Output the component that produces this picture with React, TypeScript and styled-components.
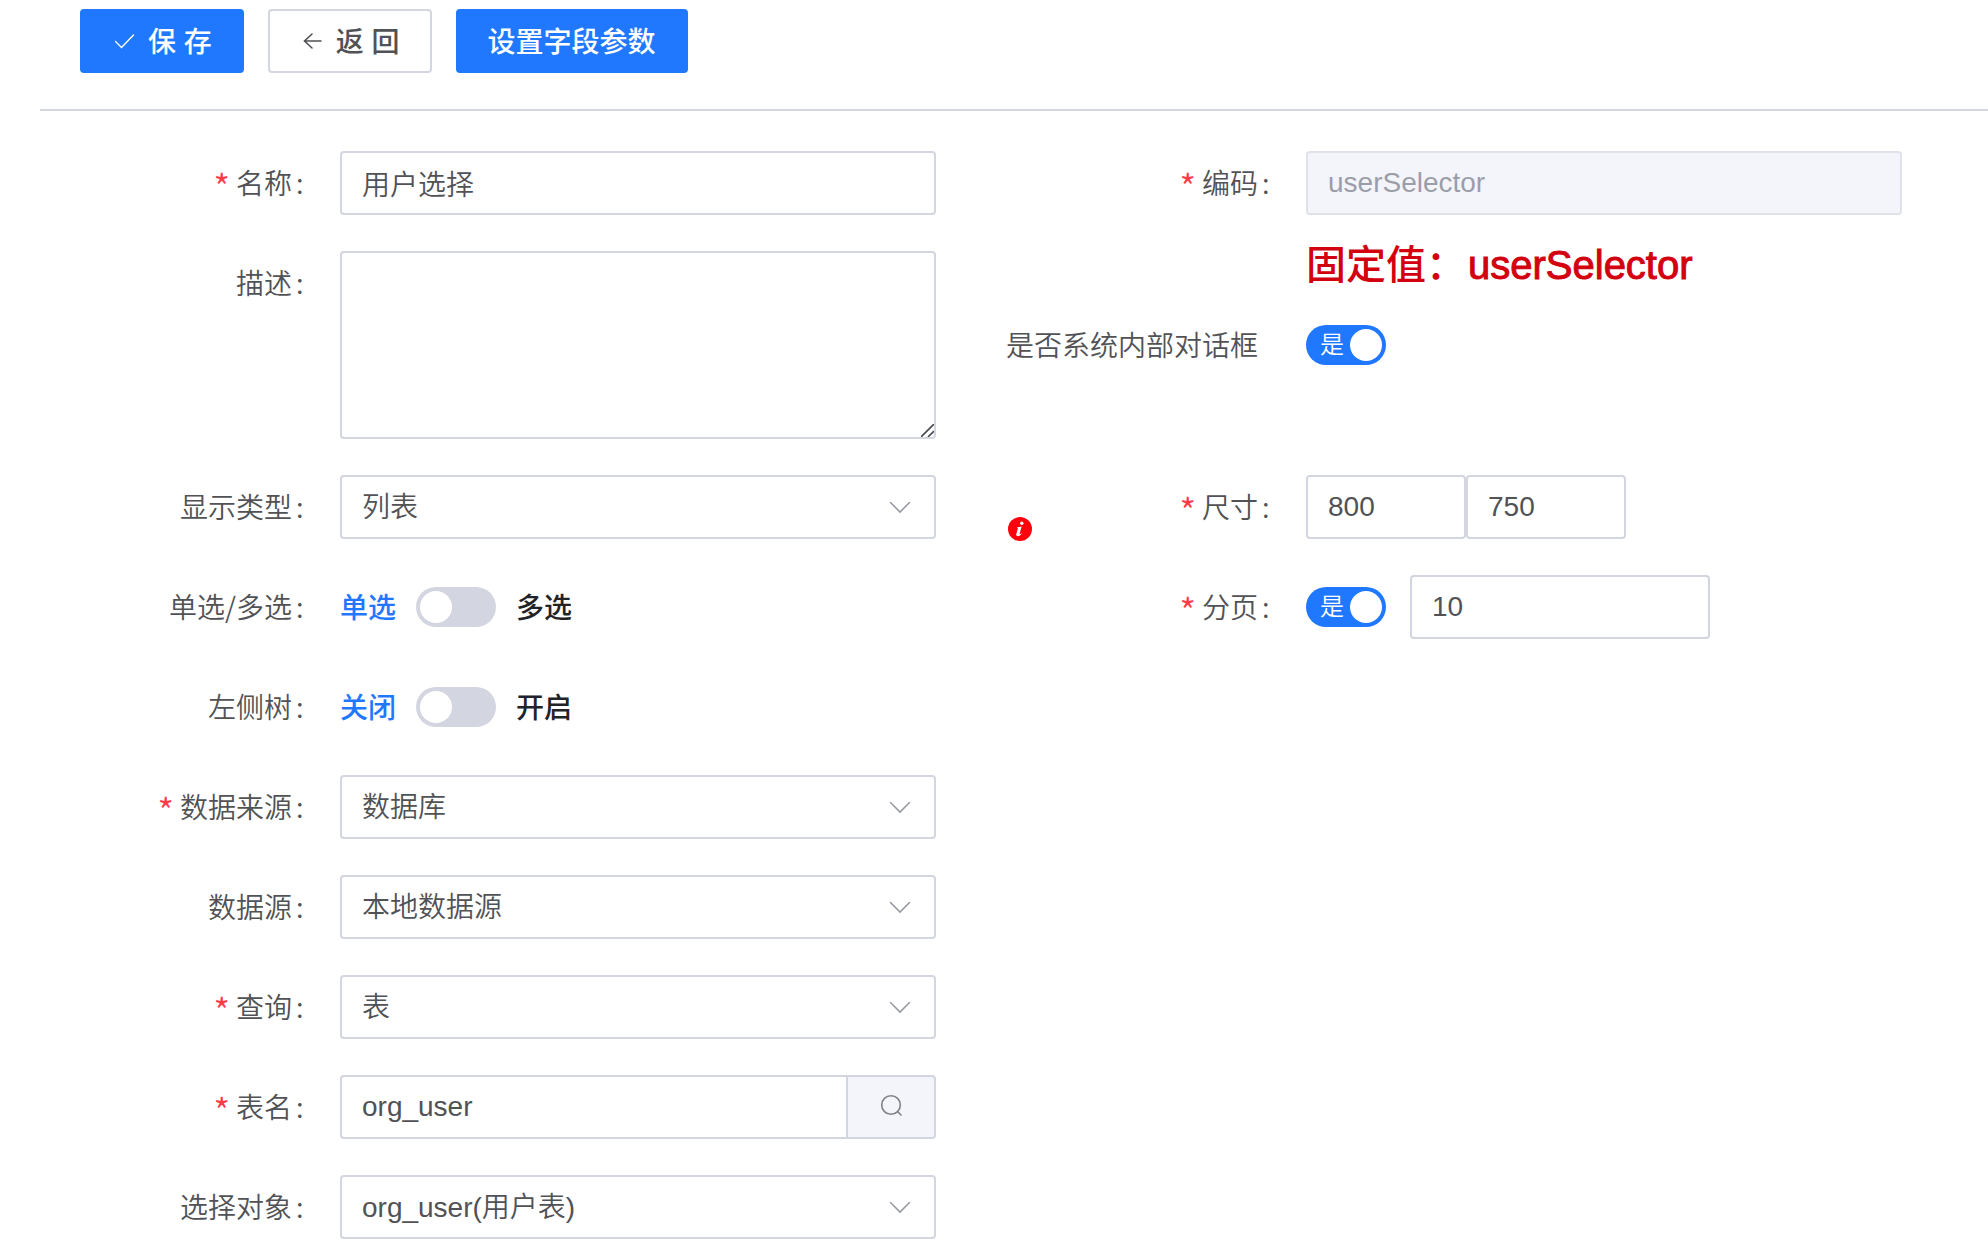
import React, { useState } from 'react';
import type { ReactNode } from 'react';
import styled, { createGlobalStyle, css } from 'styled-components';

const color = {
  primary: '#1f78ff',
  text: '#515256',
  strong: '#222326',
  muted: '#9b9ea8',
  border: '#d3d6e0',
  borderDisabled: '#dfe1eb',
  fill: '#f3f5fa',
  required: '#ff3b47',
  hint: '#d3000f',
  info: '#ff000c',
};

const GlobalStyle = createGlobalStyle`
  * { box-sizing: border-box; }
  body {
    margin: 0;
    background: #fff;
    color: ${color.text};
    font: 28px/40px "Liberation Sans", "Noto Sans CJK SC", sans-serif;
  }
  button, input, select, textarea { font: inherit; color: inherit; margin: 0; }
`;

const Page = styled.main`
  padding: 9px 0 16px 40px;
`;

const Toolbar = styled.header`
  display: flex;
  gap: 24px;
  padding: 0 40px 36px;
  border-bottom: 2px solid ${color.border};
`;

const Button = styled.button<{ $primary?: boolean }>`
  display: inline-flex;
  align-items: center;
  gap: 8px;
  height: 64px;
  padding: 0 30px;
  border: 2px solid ${(p) => (p.$primary ? color.primary : color.border)};
  border-radius: 4px;
  background: ${(p) => (p.$primary ? color.primary : '#fff')};
  color: ${(p) => (p.$primary ? '#fff' : color.text)};
  font-weight: 500;
  white-space: pre;
  cursor: pointer;
`;

const ButtonText = styled.span`
  padding-top: 3px;
`;

const Form = styled.form`
  display: grid;
  grid-template-columns: minmax(0, 1fr) minmax(0, 1fr);
  row-gap: 36px;
  padding: 40px 16px 0 0;
`;

const Item = styled.div<{ $first?: boolean }>`
  display: flex;
  align-items: flex-start;
  padding-right: 70px;
  ${(p) => p.$first && 'grid-column: 1;'}
`;

const LabelCell = styled.div<{ $colon: boolean }>`
  flex: 0 0 300px;
  display: flex;
  align-items: center;
  justify-content: flex-end;
  height: 64px;
  padding-right: ${(p) => (p.$colon ? 32 : 48)}px;
  padding-bottom: 2px;
  font-family: "Noto Sans CJK SC", sans-serif;
  font-weight: 350;
  white-space: nowrap;
`;

const Required = styled.span`
  margin-right: 6px;
  padding-top: 6px;
  color: ${color.required};
  font-size: 36px;
`;

const Colon = styled.span`
  width: 16px;
  padding-left: 4px;
`;

const Control = styled.div<{ $gap?: number }>`
  flex: 1;
  min-width: 0;
  display: flex;
  align-items: center;
  min-height: 64px;
  gap: ${(p) => p.$gap ?? 0}px;
`;

const box = css`
  border: 2px solid ${color.border};
  border-radius: 4px;
  background: #fff;
  outline: none;
  font-weight: 350;
  &:focus { border-color: ${color.primary}; }
`;

const Input = styled.input<{ $width?: number }>`
  ${box}
  width: ${(p) => (p.$width ? `${p.$width}px` : '100%')};
  min-width: 0;
  height: 64px;
  padding: 0 20px;
  &:disabled {
    border-color: ${color.borderDisabled};
    background: ${color.fill};
    color: ${color.muted};
  }
`;

const AreaWrap = styled.div`
  position: relative;
  display: flex;
  width: 100%;
`;

const TextArea = styled.textarea`
  ${box}
  width: 100%;
  height: 188px;
  padding: 10px 20px;
  resize: vertical;
  &::-webkit-resizer { background: transparent; }
`;

const Grip = styled.svg`
  position: absolute;
  right: 2px;
  bottom: 2px;
  pointer-events: none;
`;

const SelectWrap = styled.div`
  position: relative;
  width: 100%;
`;

const SelectBox = styled.select`
  ${box}
  display: block;
  width: 100%;
  height: 64px;
  padding: 2px 60px 0 20px;
  appearance: none;
`;

const Chevron = styled.svg`
  position: absolute;
  right: 24px;
  top: 20px;
  pointer-events: none;
`;

const SearchInput = styled(Input)`
  flex: 1;
  border-right: 0;
  border-radius: 4px 0 0 4px;
`;

const SearchButton = styled.button`
  display: flex;
  align-items: center;
  justify-content: center;
  width: 90px;
  height: 64px;
  padding: 0 0 4px;
  border: 2px solid ${color.border};
  border-radius: 0 4px 4px 0;
  background: ${color.fill};
  color: #808187;
  cursor: pointer;
`;

const SwitchWrap = styled.span`
  position: relative;
  display: inline-flex;
`;

const SwitchInput = styled.input`
  appearance: none;
  width: 80px;
  height: 40px;
  padding: 4px;
  border-radius: 20px;
  background: ${color.border};
  cursor: pointer;
  &::before {
    content: '';
    display: block;
    width: 32px;
    height: 32px;
    border-radius: 50%;
    background: #fff;
  }
  &:checked { background: ${color.primary}; }
  &:checked::before { margin-left: 40px; }
`;

const SwitchText = styled.span`
  position: absolute;
  left: 14px;
  top: 0;
  color: #fff;
  font-size: 24px;
  font-weight: 350;
  pointer-events: none;
`;

const SideText = styled.span<{ $active: boolean }>`
  padding-top: 3px;
  color: ${(p) => (p.$active ? color.primary : color.strong)};
  font-weight: 500;
`;

const HintStack = styled.div`
  display: flex;
  flex-direction: column;
  gap: 34px;
`;

const Hint = styled.p`
  margin: 0 0 0 300px;
  color: ${color.hint};
  font-size: 40px;
  line-height: 28px;
  font-weight: 500;
  white-space: nowrap;
`;

const HintCode = styled.span`
  margin-left: 2px;
  -webkit-text-stroke: 1px ${color.hint};
`;

const InfoIcon = styled.svg`
  align-self: flex-end;
  flex: none;
  margin: 0 auto -4px 2px;
`;

interface FieldProps {
  id: string;
  label: string;
  required?: boolean;
  colon?: boolean;
  first?: boolean;
  gap?: number;
  prefix?: ReactNode;
  children: ReactNode;
}

function Field({ id, label, required, colon = true, first, gap, prefix, children }: FieldProps) {
  return (
    <Item $first={first}>
      <LabelCell $colon={colon}>
        {prefix}
        {required && <Required>*</Required>}
        <label htmlFor={id}>{label}</label>
        {colon && <Colon>:</Colon>}
      </LabelCell>
      <Control $gap={gap}>{children}</Control>
    </Item>
  );
}

function Select({ id, options }: { id: string; options: string[] }) {
  return (
    <SelectWrap>
      <SelectBox id={id}>
        {options.map((o) => (
          <option key={o}>{o}</option>
        ))}
      </SelectBox>
      <Chevron width="24" height="24" viewBox="0 0 24 24" fill="none" stroke="#999ba3" strokeWidth="1.6" strokeLinecap="round">
        <path d="M2.5 7.5 12 17l9.5-9.5" />
      </Chevron>
    </SelectWrap>
  );
}

function YesSwitch({ id }: { id: string }) {
  const [on, setOn] = useState(true);
  return (
    <SwitchWrap>
      <SwitchInput id={id} type="checkbox" role="switch" checked={on} onChange={() => setOn(!on)} />
      {on && <SwitchText>是</SwitchText>}
    </SwitchWrap>
  );
}

function PairSwitch({ id, off, on }: { id: string; off: string; on: string }) {
  const [checked, setChecked] = useState(false);
  return (
    <>
      <SideText $active={!checked}>{off}</SideText>
      <SwitchInput id={id} type="checkbox" role="switch" checked={checked} onChange={() => setChecked(!checked)} />
      <SideText $active={checked}>{on}</SideText>
    </>
  );
}

export default function App() {
  return (
    <>
      <GlobalStyle />
      <Page>
        <Toolbar>
          <Button type="button" $primary>
            <svg width="28" height="28" viewBox="0 0 28 28" fill="none" stroke="currentColor" strokeWidth="1.4" strokeLinecap="round">
              <path d="M3.500 14.500l6 6L21.500 8" />
            </svg>
            <ButtonText>保 存</ButtonText>
          </Button>
          <Button type="button">
            <svg width="28" height="28" viewBox="0 0 28 28" fill="none" stroke="currentColor" strokeWidth="1.600" strokeLinecap="round">
              <path d="M12 7L4.500 14l7.500 7M4.500 14h16.500" />
            </svg>
            <ButtonText>返 回</ButtonText>
          </Button>
          <Button type="button" $primary>
            <ButtonText>设置字段参数</ButtonText>
          </Button>
        </Toolbar>

        <Form onSubmit={(e) => e.preventDefault()}>
          <Field id="name" label="名称" required>
            <Input id="name" defaultValue="用户选择" />
          </Field>
          <Field id="code" label="编码" required>
            <Input id="code" defaultValue="userSelector" disabled />
          </Field>

          <Field id="desc" label="描述">
            <AreaWrap>
              <TextArea id="desc" />
              <Grip width="13" height="13" viewBox="0 0 13 13" fill="none" stroke="#48494c" strokeWidth="1.6">
                <path d="M0 13L13 0M7 13l6-6" />
              </Grip>
            </AreaWrap>
          </Field>
          <HintStack>
            <Hint>
              固定值：<HintCode>userSelector</HintCode>
            </Hint>
            <Field id="system" label="是否系统内部对话框" colon={false}>
              <YesSwitch id="system" />
            </Field>
          </HintStack>

          <Field id="type" label="显示类型">
            <Select id="type" options={['列表', '树形']} />
          </Field>
          <Field
            id="width"
            label="尺寸"
            required
            prefix={
              <InfoIcon width="24" height="24" viewBox="0 0 24 24">
                <circle cx="12" cy="12" r="12" fill={color.info} />
                <circle cx="13.8" cy="6.2" r="1.7" fill="#fff" />
                <path d="M9 10.3c1.6-.3 3-.6 4.6-.9l-2 7.4c-.2.8.4.8 1.8-.9l.5.4c-1.3 2-2.6 3-4 3-1.5 0-1.9-1-1.5-2.5l1.4-5c.1-.7-.1-.9-.8-1z" fill="#fff" />
              </InfoIcon>
            }
          >
            <Input id="width" $width={160} defaultValue="800" />
            <Input aria-label="高度" $width={160} defaultValue="750" />
          </Field>

          <Field id="multi" label="单选/多选" gap={20}>
            <PairSwitch id="multi" off="单选" on="多选" />
          </Field>
          <Field id="paging" label="分页" required gap={24}>
            <YesSwitch id="paging" />
            <Input aria-label="每页条数" $width={300} defaultValue="10" />
          </Field>

          <Field id="tree" label="左侧树" gap={20} first>
            <PairSwitch id="tree" off="关闭" on="开启" />
          </Field>
          <Field id="source" label="数据来源" required first>
            <Select id="source" options={['数据库']} />
          </Field>
          <Field id="datasource" label="数据源" first>
            <Select id="datasource" options={['本地数据源']} />
          </Field>
          <Field id="query" label="查询" required first>
            <Select id="query" options={['表', '视图']} />
          </Field>
          <Field id="table" label="表名" required first>
            <SearchInput id="table" defaultValue="org_user" />
            <SearchButton type="button" aria-label="搜索">
              <svg width="28" height="28" viewBox="0 0 28 28" fill="none" stroke="currentColor" strokeWidth="1.6" strokeLinecap="round">
                <circle cx="14" cy="14" r="9.3" />
                <path d="M21 21l3 3" />
              </svg>
            </SearchButton>
          </Field>
          <Field id="object" label="选择对象" first>
            <Select id="object" options={['org_user(用户表)']} />
          </Field>
        </Form>
      </Page>
    </>
  );
}
